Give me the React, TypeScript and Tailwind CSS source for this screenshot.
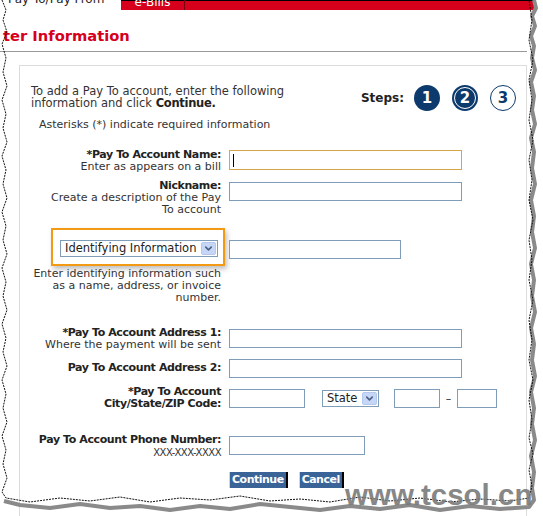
import { ChevronDown } from "lucide-react";

type RowProps = {
  readonly label: string[];
  readonly required?: boolean;
  readonly help?: string[];
  readonly children: React.ReactNode;
  readonly className?: string;
};

const Row = ({ label, required, help, children, className }: RowProps) => (
  <div className={`flex gap-2 ${className ?? ""}`}>
    <div className="w-[190px] shrink-0 text-right leading-[12px]">
      {label.map((line, i) => (
        <div key={line} className="font-bold tracking-[-0.4px] whitespace-nowrap text-[#222]">
          {required && i === 0 && "*"}
          {line}
        </div>
      ))}
      {help?.map((line) => (
        <div key={line} className="whitespace-nowrap text-[#333]">
          {line}
        </div>
      ))}
    </div>
    <div>{children}</div>
  </div>
);

const Input = ({ className }: { readonly className?: string }) => (
  <div className={`h-[19px] border border-[#7f9db9] bg-white ${className ?? ""}`} />
);

const Select = ({ label, className }: { readonly label: string; readonly className?: string }) => (
  <div
    className={`flex h-[17px] items-center justify-between border border-[#7f9db9] bg-white pl-[4px] pr-px text-[#222] ${className ?? ""}`}
  >
    <span className="text-[11.5px] leading-[15px] whitespace-nowrap">{label}</span>
    <span className="flex h-[13px] w-[15px] shrink-0 items-center justify-center rounded-[2px] border border-[#b4c8ee] bg-[#c6d6f7]">
      <ChevronDown className="h-[11px] w-[11px] text-[#4d6185]" strokeWidth={3.5} />
    </span>
  </div>
);

const Step = ({ n, variant }: { readonly n: number; readonly variant: "done" | "current" | "todo" }) => {
  if (variant === "todo") {
    return (
      <div className="flex h-[26px] w-[26px] items-center justify-center rounded-full border-[1.5px] border-[#0d3a6c] bg-white text-[15px] font-bold text-[#0d3a6c]">
        {n}
      </div>
    );
  }
  return (
    <div className="flex h-[26px] w-[26px] items-center justify-center rounded-full bg-[#0d3a6c] text-[15px] font-bold text-white">
      {variant === "current" ? (
        <div className="flex h-[22px] w-[22px] items-center justify-center rounded-full border border-white">
          {n}
        </div>
      ) : (
        n
      )}
    </div>
  );
};

const Button = ({ label }: { readonly label: string }) => (
  <button className="h-[16px] border-r-2 border-l border-r-black border-l-[#c9d6e6] bg-[#3a6497] px-[2px] text-[11px] leading-[16px] font-bold tracking-[-0.5px] text-white">
    {label}
  </button>
);

const TornEdges = () => (
  <svg
    className="pointer-events-none absolute inset-0"
    width={543}
    height={516}
    viewBox="0 0 543 516"
  >
    <path
      d="M534 0 L536 8 L532 16 L535 26 L531 36 L534 46 L532 58 L535 70 L531 82 L534 96 L532 110 L535 124 L531 138 L534 152 L532 168 L535 184 L531 200 L534 216 L532 232 L535 248 L531 264 L534 280 L532 296 L535 312 L531 328 L534 344 L532 360 L535 376 L531 392 L534 408 L532 424 L535 440 L531 456 L534 472 L532 488 L534 500 L529 507 L500 509 L470 506 L440 510 L410 505 L380 509 L350 506 L320 510 L290 507 L260 504 L230 509 L200 506 L170 510 L140 506 L110 508 L80 504 L50 508 L20 505 L4 501"
      fill="none"
      stroke="#8a8a8a"
      strokeWidth={4}
      strokeLinejoin="round"
    />
    <path
      d="M2 0 L6 10 L3 20 L7 32 L2 44 L6 58 L3 72 L7 86 L2 100 L6 114 L3 128 L7 142 L2 156 L6 170 L3 184 L7 198 L2 212 L6 226 L3 240 L7 254 L2 268 L6 282 L3 296 L7 310 L2 324 L6 338 L3 352 L7 366 L2 380 L6 394 L3 408 L7 422 L2 436 L6 450 L3 464 L7 478 L2 492 L6 498 L30 502 L60 498 L90 501 L120 497 L150 502 L180 498 L210 500 L240 496 L270 501 L300 499 L330 502 L360 497 L390 501 L420 498 L450 502 L480 499 L510 501 L529 498 L532 486 L529 470 L533 454 L529 438 L532 420 L529 400 L533 380 L529 360 L532 340 L529 320 L533 300 L529 280 L532 260 L529 240 L533 220 L529 200 L532 180 L529 160 L533 140 L529 120 L532 100 L529 80 L533 60 L529 40 L532 20 L529 0"
      fill="none"
      stroke="#111"
      strokeWidth={1}
      strokeDasharray="2 1"
    />
  </svg>
);

export default function App() {
  return (
    <div className="relative h-[516px] w-[543px] overflow-hidden bg-white font-['DejaVu_Sans',Verdana,sans-serif] text-[11px] text-[#333]">
      <div className="flex h-[10px] overflow-hidden">
        <div className="w-[121px] shrink-0 pl-[8px] text-[12px] leading-[10px] whitespace-nowrap text-[#222]">
          <div className="-mt-[6px]">Pay To/Pay From</div>
        </div>
        <div className="w-[63px] shrink-0 border-t border-black bg-[#d6001c] text-center text-[12px] whitespace-nowrap text-white">
          <div className="-mt-[8px]">e-Bills</div>
        </div>
        <div className="w-px shrink-0 bg-[#7a0010]" />
        <div className="w-[350px] shrink-0 border-t border-black bg-[#d6001c]" />
      </div>

      <h1 className="mt-[16px] pl-[3px] text-[14.7px] leading-[20px] font-bold text-[#d6001c]">
        ter Information
      </h1>
      <div className="mt-[5px] h-px w-[527px] bg-[#999]" />

      <div className="mt-[13px] ml-[19px] h-[460px] w-[508px] border border-[#dcdcdc] pt-[19px] pl-[11px]">
        <div className="flex">
          <div className="text-[11.5px] leading-[12px] whitespace-nowrap">
            <div>To add a Pay To account, enter the following</div>
            <div>
              information and click <b className="tracking-[-0.3px] text-[#222]">Continue.</b>
            </div>
          </div>
          <div className="ml-auto mr-[10px] flex items-center gap-[12px]">
            <span className="mr-[-2px] text-[12px] font-bold text-[#222]">Steps:</span>
            <Step n={1} variant="done" />
            <Step n={2} variant="current" />
            <Step n={3} variant="todo" />
          </div>
        </div>
        <div className="mt-[8px] pl-[8px] leading-[12px]">Asterisks (*) indicate required information</div>

        <Row className="mt-[18px]" label={["Pay To Account Name:"]} required help={["Enter as appears on a bill"]}>
          <div className="mt-px flex h-[20px] w-[233px] items-center border border-[#d4a64a] bg-white pl-[3px]">
            <div className="h-[13px] w-px bg-black" />
          </div>
        </Row>

        <Row className="mt-[7px]" label={["Nickname:"]} help={["Create a description of the Pay", "To account"]}>
          <Input className="mt-[2px] w-[233px]" />
        </Row>

        <div className="mt-[12px] flex gap-2">
          <div className="flex w-[190px] shrink-0 justify-end">
            <div className="mr-[-4px] border-2 border-[#f39a14] pt-[10px] pr-[5px] pb-[7px] pl-[7px] shadow-[2px_3px_5px_rgba(0,0,0,0.25)]">
              <Select label="Identifying Information" className="w-[158px]" />
            </div>
          </div>
          <div className="pt-[12px]">
            <Input className="w-[172px]" />
          </div>
        </div>
        <div className="mt-[2px] w-[190px] text-right leading-[12px]">
          Enter identifying information such as a name, address, or invoice number.
        </div>

        <Row className="mt-[23px]" label={["Pay To Account Address 1:"]} required help={["Where the payment will be sent"]}>
          <Input className="mt-[2px] w-[233px]" />
        </Row>

        <Row className="mt-[11px]" label={["Pay To Account Address 2:"]}>
          <Input className="-mt-[3px] w-[233px]" />
        </Row>

        <Row className="mt-[8px]" label={["Pay To Account", "City/State/ZIP Code:"]} required>
          <div className="flex items-start">
            <Input className="mt-[3px] w-[76px]" />
            <Select label="State" className="mt-[4px] ml-[17px] w-[57px]" />
            <Input className="mt-[3px] ml-[15px] w-[46px]" />
            <span className="mt-[5px] w-[17px] text-center text-[#222]">–</span>
            <Input className="mt-[3px] w-[40px]" />
          </div>
        </Row>

        <div className="mt-[24px] flex gap-2">
          <div className="w-[190px] shrink-0 text-right leading-[12px]">
            <div className="font-bold tracking-[-0.4px] whitespace-nowrap text-[#222]">Pay To Account Phone Number:</div>
            <div className="mt-px text-[10px] tracking-[-0.5px]">XXX-XXX-XXXX</div>
          </div>
          <Input className="mt-[2px] w-[136px]" />
        </div>

        <div className="mt-[13px] ml-[198px] flex gap-[11px]">
          <Button label="Continue" />
          <Button label="Cancel" />
        </div>
      </div>

      <TornEdges />

      <div className="pointer-events-none absolute top-[479px] left-[345px] font-['Liberation_Sans',Arial,sans-serif] text-[29.5px] leading-[32px] font-bold text-[#7b7b7b] opacity-90">
        www.tcsol.cn
      </div>
    </div>
  );
}
